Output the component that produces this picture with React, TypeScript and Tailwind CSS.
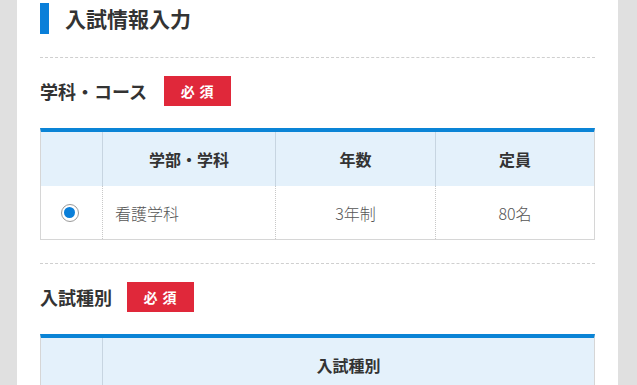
import React from 'react'

const font = { fontFamily: '"Noto Sans CJK JP", "Noto Sans", sans-serif' }

function Badge() {
  return (
    <span className="flex h-[30px] w-[67px] items-center justify-center bg-[#e0283a] pl-[4px] text-[14px] font-bold tracking-[0.35em] text-white">
      必須
    </span>
  )
}

function SectionLabel({ label, gap }: { label: string; gap: string }) {
  return (
    <div className={`flex h-[30px] items-center ${gap}`}>
      <span className="text-[18px] font-bold text-[#333]">{label}</span>
      <Badge />
    </div>
  )
}

function Radio() {
  return (
    <span className="flex h-[18px] w-[18px] items-center justify-center rounded-full border-[1.5px] border-[#9a9a9a] bg-white">
      <span className="h-[11px] w-[11px] rounded-full bg-[#0a7fd9]" />
    </span>
  )
}

export default function App() {
  return (
    <div className="min-h-screen bg-[#e0e0e0]" style={font}>
      <div className="ml-[17px] w-[601px] bg-white px-[23px] pt-[3px] pb-10">
        <div className="flex h-[31px] items-center gap-4">
          <span className="h-full w-[9px] bg-[#0a7fd9]" />
          <h1 className="text-[21px] font-bold text-[#333]">入試情報入力</h1>
        </div>

        <div className="mt-[23px] border-t border-dashed border-[#cfcfcf]" />

        <div className="mt-[18px]">
          <SectionLabel label="学科・コース" gap="gap-[17px]" />
        </div>

        <div className="mt-[22px] border-x border-t-4 border-b border-[#d6d6d6] border-t-[#0a84d6]">
          <div className="grid h-[54px] grid-cols-[61px_173px_160px_1fr] bg-[#e4f1fb] text-[16px] font-bold text-[#333]">
            <div />
            <div className="flex items-center justify-center border-l border-[#c7d5e1]">学部・学科</div>
            <div className="flex items-center justify-center border-l border-[#c7d5e1]">年数</div>
            <div className="flex items-center justify-center border-l border-[#c7d5e1]">定員</div>
          </div>
          <div className="grid h-[53px] grid-cols-[61px_173px_160px_1fr] text-[16px] font-light text-[#555]">
            <div className="flex items-center justify-center pr-[4px]">
              <Radio />
            </div>
            <div className="flex items-center border-l border-dotted border-[#c8c8c8] pl-[12px]">看護学科</div>
            <div className="flex items-center justify-center border-l border-dotted border-[#c8c8c8]">3年制</div>
            <div className="flex items-center justify-center border-l border-dotted border-[#c8c8c8]">80名</div>
          </div>
        </div>

        <div className="mt-[23px] border-t border-dashed border-[#cfcfcf]" />

        <div className="mt-[18px]">
          <SectionLabel label="入試種別" gap="gap-[15px]" />
        </div>

        <div className="mt-[22px] border-x border-t-4 border-b border-[#d6d6d6] border-t-[#0a84d6]">
          <div className="grid h-[54px] grid-cols-[61px_1fr] bg-[#e4f1fb] text-[16px] font-bold text-[#333]">
            <div />
            <div className="flex items-center justify-center border-l border-[#c7d5e1]">入試種別</div>
          </div>
        </div>
      </div>
    </div>
  )
}
